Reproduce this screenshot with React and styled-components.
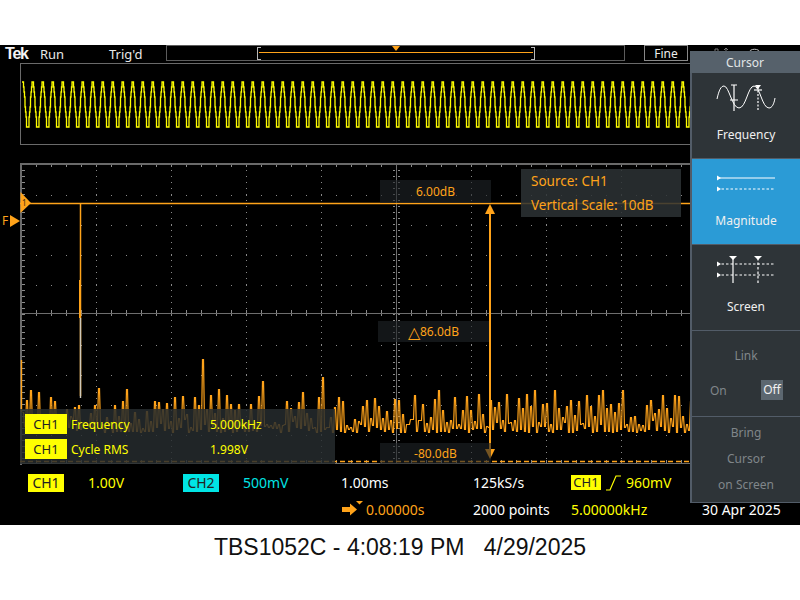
import React from "react";
import styled, { createGlobalStyle } from "styled-components";

const ORANGE = "#ffa31a";
const YELLOW = "#ffff00";
const CYAN = "#00e5e5";
const UI_FONT = '"Noto Sans", "Open Sans", sans-serif';

const Global = createGlobalStyle`
  html, body {
    margin: 0;
    padding: 0;
    background: #ffffff;
  }
`;

const Page = styled.div`
  width: 800px;
  height: 600px;
  overflow: hidden;
  display: flex;
  flex-direction: column;
  padding-top: 45px;
  box-sizing: border-box;
  background: #ffffff;
`;

const Scope = styled.div`
  position: relative;
  height: 480px;
  background: #000000;
  overflow: hidden;
  font-family: ${UI_FONT};
  display: flex;
  flex-direction: column;
`;

const Caption = styled.div`
  flex: 1;
  display: flex;
  align-items: center;
  justify-content: center;
  padding-bottom: 30px;
  font-family: "Liberation Sans", Arial, sans-serif;
  font-size: 23px;
  color: #111111;
  white-space: pre;
`;

const Header = styled.div`
  height: 18px;
  flex: none;
  display: flex;
  align-items: flex-start;
  color: #e8e8e8;
  font-size: 13px;
  line-height: 17px;
  padding-left: 5px;
`;

const Logo = styled.span`
  width: 35px;
  font-family: "Liberation Sans", Arial, sans-serif;
  font-weight: 700;
  font-size: 16px;
  letter-spacing: -1.2px;
  color: #f4f4f4;
`;

const HeaderText = styled.span`
  width: ${(p) => p.$w}px;
  padding-top: 1px;
`;

const TriggerBar = styled.div`
  position: relative;
  width: 459px;
  height: 16px;
  box-sizing: border-box;
  border: 1px solid #5c5c5c;
`;

const TriggerWindow = styled.div`
  position: absolute;
  left: 90px;
  top: 1px;
  width: 278px;
  height: 13px;
  box-sizing: border-box;
  border: 1px solid #b8b8b8;
  border-top: 0;
  border-bottom: 0;
  background:
    linear-gradient(#b8b8b8, #b8b8b8) 0 0 / 3px 1px no-repeat,
    linear-gradient(#b8b8b8, #b8b8b8) 0 100% / 3px 1px no-repeat,
    linear-gradient(#b8b8b8, #b8b8b8) 100% 0 / 3px 1px no-repeat,
    linear-gradient(#b8b8b8, #b8b8b8) 100% 100% / 3px 1px no-repeat;

  &::after {
    content: "";
    position: absolute;
    left: 1px;
    right: 1px;
    top: 5px;
    height: 1px;
    background: ${ORANGE};
  }
`;

const TriggerPin = styled.div`
  position: absolute;
  left: 225px;
  top: 0;
  width: 0;
  height: 0;
  border-left: 4px solid transparent;
  border-right: 4px solid transparent;
  border-top: 5px solid ${ORANGE};
`;

const FineBox = styled.div`
  width: 44px;
  height: 16px;
  margin-left: 19px;
  box-sizing: border-box;
  border: 1px solid #888888;
  text-align: center;
  font-size: 12px;
  line-height: 15px;
  color: #eeeeee;
`;

const PeekIcons = styled.svg`
  margin: 1px 0 0 26px;
  flex: none;
`;

const Overview = styled.div`
  height: 82px;
  flex: none;
  margin-left: 20px;
  box-sizing: border-box;
  border: 1px solid #6a6a6a;
  border-right: 0;
  overflow: hidden;
`;

const FullSvg = styled.svg`
  display: block;
`;

const Plot = styled.div`
  position: relative;
  height: 302px;
  margin-top: 18px;
  flex: none;
`;

const CursorTag = styled.div`
  position: absolute;
  left: ${(p) => p.$x}px;
  top: ${(p) => p.$y}px;
  width: 111px;
  height: ${(p) => p.$h}px;
  background: rgba(30, 36, 38, 0.62);
  color: ${ORANGE};
  font-size: 12px;
  display: flex;
  align-items: center;
  justify-content: center;
`;

const DeltaSign = styled.span`
  font-size: 16px;
  line-height: 16px;
`;

const SourceBox = styled.div`
  position: absolute;
  left: 521px;
  top: 6px;
  width: 160px;
  height: 48px;
  padding-left: 10px;
  box-sizing: border-box;
  background: rgba(44, 50, 52, 0.86);
  color: ${ORANGE};
  font-size: 13.5px;
  line-height: 24px;
`;

const Readouts = styled.div`
  position: absolute;
  left: 20px;
  top: 246px;
  width: 315px;
  height: 55px;
  box-sizing: border-box;
  padding: 5px 0 0 5px;
  background: rgba(38, 44, 46, 0.84);
  display: flex;
  flex-direction: column;
  gap: 5px;
`;

const ReadoutRow = styled.div`
  display: grid;
  grid-template-columns: 46px 139px auto;
  align-items: center;
  height: 20px;
  color: ${YELLOW};
  font-size: 12px;
`;

const ReadoutBadge = styled.span`
  width: 42px;
  height: 20px;
  background: ${YELLOW};
  color: #222222;
  font-size: 13px;
  line-height: 20px;
  text-align: center;
`;

const Status = styled.div`
  flex: 1;
  display: grid;
  grid-template-columns: 155px 158px 132px 98px 131px auto;
  grid-template-rows: 27px 27px;
  align-items: center;
  padding: 4px 0 0 28px;
  font-size: 14px;
`;

const Cell = styled.div`
  display: flex;
  align-items: center;
  gap: ${(p) => p.$gap || 0}px;
  color: ${(p) => p.$color || "#ffffff"};
  white-space: nowrap;
  grid-column: ${(p) => p.$col};
`;

const Badge = styled.span`
  background: ${(p) => p.$bg};
  color: #222222;
  width: ${(p) => p.$w || 36}px;
  height: ${(p) => p.$h || 18}px;
  line-height: ${(p) => p.$h || 18}px;
  text-align: center;
  font-size: ${(p) => (p.$h ? 13 : 14)}px;
`;

const Menu = styled.div`
  position: absolute;
  left: 690px;
  top: 6px;
  width: 110px;
  height: 452px;
  box-sizing: border-box;
  background: #525c68;
  display: flex;
  flex-direction: column;
  padding-left: 2px;
  color: #f0f0f0;
  font-size: 12px;
`;

const MenuTitle = styled.div`
  height: 22px;
  margin-left: -2px;
  background: #56616b;
  text-align: center;
  line-height: 24px;
  color: #e2e6e8;
`;

const MenuItem = styled.div`
  height: 85px;
  margin-bottom: 1px;
  box-sizing: border-box;
  background: ${(p) => (p.$active ? "#2b9bd6" : "#2e3438")};
  display: flex;
  flex-direction: column;
  align-items: center;
  padding-top: ${(p) => p.$pad ?? 11}px;
  &:last-child {
    margin-bottom: 0;
  }
`;

const MenuIcon = styled.svg`
  display: block;
  margin-bottom: ${(p) => p.$gap}px;
  flex: none;
`;

const DimLine = styled.div`
  color: #80868a;
  line-height: 26px;
`;

const Toggle = styled.div`
  width: 100%;
  display: flex;
  justify-content: space-between;
  align-items: center;
  box-sizing: border-box;
  padding: 0 17px 0 18px;
  margin-top: 11px;
  color: #80868a;
`;

const ToggleOn = styled.span`
  width: 22px;
  height: 20px;
  line-height: 20px;
  text-align: center;
  background: #5c6770;
  color: #f2f2f2;
`;

// seeded so the noise floor comes out the same every load
const rand = (() => {
  let a = 20250429;
  return () => {
    a = (a + 0x6d2b79f5) | 0;
    let t = Math.imul(a ^ (a >>> 15), 1 | a);
    t = (t + Math.imul(t ^ (t >>> 7), 61 | t)) ^ t;
    return ((t ^ (t >>> 14)) >>> 0) / 4294967296;
  };
})();

const PEAKS = [
  [30, 390], [36, 392], [95, 388], [126, 389], [200, 359], [215, 389], [260, 381], [302, 392],
  [319, 377], [437, 390], [504, 394], [533, 390], [552, 390], [600, 390], [620, 390],
];

// bins alternate between a tall and a low sample, which gives the thin spikes
const spectrumPoints = () => {
  const pts = [];
  const peaks = [...PEAKS];
  let tall = true;
  for (let x = 22; x < 692; x += 2) {
    let y = tall ? 432 - Math.round(4 + rand() * 34) : 432 - Math.round(rand() * rand() * 14);
    if (tall && peaks.length && x >= peaks[0][0]) y = peaks.shift()[1];
    pts.push(`${x + 0.5},${y + 0.5}`);
    pts.push(`${x + 1.5},${y + 0.5}`);
    tall = !tall;
  }
  return pts.join(" ");
};

const wavePoints = () => {
  const pts = [];
  for (let x = 21; x < 692; x += 0.5) {
    const v = 103.5 + 23.5 * Math.cos((2 * Math.PI * (x - 26.5)) / 10);
    const y = Math.round(v / 5) * 5 + 1;
    pts.push(`${x},${y}`);
    pts.push(`${x + 0.5},${y}`);
  }
  return pts.join(" ");
};

const range = (from, to, step) => {
  const out = [];
  for (let v = from; v <= to; v += step) out.push(v);
  return out;
};

const Graticule = () => {
  const cols = range(21, 771, 75);
  const rows = range(164, 464, 30);
  return (
    <g shapeRendering="crispEdges">
      {rows.map((y) =>
        range(36, 771, 15).map((x) => (
          <rect key={`r${y}-${x}`} x={x} y={y + 1} width="1" height="1" fill="#8a8a8a" />
        ))
      )}
      {cols.map((x) =>
        range(170, 460, 6).map((y) => (
          <rect key={`c${x}-${y}`} x={x} y={y} width="1" height="1" fill="#8a8a8a" />
        ))
      )}
      {range(170, 460, 6).map((y) => (
        <g key={`t${y}`}>
          <rect x="22" y={y} width="3" height="1" fill="#8a8a8a" />
          <rect x="393" y={y} width="2" height="1" fill="#8a8a8a" />
          <rect x="398" y={y} width="2" height="1" fill="#8a8a8a" />
        </g>
      ))}
      {range(36, 771, 15).map((x) => (
        <g key={`h${x}`}>
          <rect x={x} y="310" width="1" height="6" fill="#8a8a8a" />
          <rect x={x} y="165" width="1" height="2" fill="#8a8a8a" />
          <rect x={x} y="460" width="1" height="3" fill="#8a8a8a" />
        </g>
      ))}
      <rect x="21" y="313" width="780" height="1" fill="#6e6e6e" />
      <rect x="396" y="164" width="1" height="300" fill="#6e6e6e" />
      <rect x="20" y="163" width="780" height="1.5" fill="#6a6a6a" />
      <rect x="20" y="163" width="1.5" height="302" fill="#6a6a6a" />
      <rect x="20" y="463" width="780" height="1" fill="#6a6a6a" />
    </g>
  );
};

const Spectrum = () => (
  <FullSvg width="800" height="302" viewBox="0 163 800 302">
    <Graticule />
    <polyline points={spectrumPoints()} fill="none" stroke={ORANGE} strokeWidth="1.2" />
    <path d="M21.5 360V412" stroke={ORANGE} strokeWidth="1.4" />
    <path d="M80.5 203V396" stroke={ORANGE} strokeWidth="1.5" />
    <path d="M80.5 318V398" stroke="#cfc9ba" strokeWidth="1.4" />
    <path d="M80 280V318" stroke={ORANGE} strokeWidth="2" />
    <path d="M20 203.5H690" stroke={ORANGE} strokeWidth="1.5" />
    <path d="M20 461.5H690" stroke={ORANGE} strokeWidth="1.4" strokeDasharray="5 3" />
    <path d="M490 212V452" stroke={ORANGE} strokeWidth="2" />
    <path d="M490 204L495 214H485Z" fill={ORANGE} />
    <path d="M490 459L495 449H485Z" fill={ORANGE} />
    <path d="M20.5 192L31 203L20.5 213Z" fill={ORANGE} />
    <text x="22" y="206" fontSize="8" fill="#3a2a10" fontFamily="Noto Sans, sans-serif">1</text>
    <path d="M10 215L20 221L10 227Z" fill={ORANGE} />
    <text x="2" y="225" fontSize="12" fill={ORANGE} fontFamily="Noto Sans, sans-serif">F</text>
  </FullSvg>
);

const FrequencyIcon = () => (
  <MenuIcon $gap={14} width="60" height="28" viewBox="0 0 60 28" fill="none" stroke="#ffffff">
    <path d="M1 15C3 6 5 2 8 2C13 2 16 24 23 24C30 24 32 2 38 2C44 2 46 24 53 24C56 24 58 20 59 14" strokeWidth="1" />
    <path d="M18 1V27M14 16H22M15 1H21" strokeWidth="1.2" />
    <path d="M42 3V27" strokeWidth="1.2" strokeDasharray="2 1.5" />
    <path d="M38 6H46" strokeWidth="1.2" />
    <path d="M39 1H45L42 5Z" fill="#ffffff" stroke="none" />
  </MenuIcon>
);

const MagnitudeIcon = () => (
  <MenuIcon $gap={16} width="60" height="26" viewBox="0 0 60 26" fill="none" stroke="#ffffff">
    <path d="M1 8H59" strokeWidth="1.2" />
    <path d="M1 19H59" strokeWidth="1.2" strokeDasharray="2.5 2" />
    <path d="M1 5.5L5 8L1 10.5ZM1 16.5L5 19L1 21.5Z" fill="#ffffff" stroke="none" />
  </MenuIcon>
);

const ScreenIcon = () => (
  <MenuIcon $gap={14} width="60" height="28" viewBox="0 0 60 28" fill="none" stroke="#ffffff">
    <path d="M1 8H59M1 19H59" strokeWidth="1.2" strokeDasharray="2.5 2" />
    <path d="M1 5.5L5 8L1 10.5ZM1 16.5L5 19L1 21.5Z" fill="#ffffff" stroke="none" />
    <path d="M17 2V27" strokeWidth="1.2" />
    <path d="M42 2V27" strokeWidth="1.2" strokeDasharray="2.5 2" />
    <path d="M13 0H21L17 4ZM38 0H46L42 4Z" fill="#ffffff" stroke="none" />
  </MenuIcon>
);

const SideMenu = () => (
  <Menu>
    <MenuTitle>Cursor</MenuTitle>
    <MenuItem>
      <FrequencyIcon />
      Frequency
    </MenuItem>
    <MenuItem $active>
      <MagnitudeIcon />
      Magnitude
    </MenuItem>
    <MenuItem>
      <ScreenIcon />
      Screen
    </MenuItem>
    <MenuItem $pad={12}>
      <DimLine>Link</DimLine>
      <Toggle>
        On
        <ToggleOn>Off</ToggleOn>
      </Toggle>
    </MenuItem>
    <MenuItem $pad={3}>
      <DimLine>Bring</DimLine>
      <DimLine>Cursor</DimLine>
      <DimLine>on Screen</DimLine>
    </MenuItem>
  </Menu>
);

export default function App() {
  return (
    <Page>
      <Global />
      <Scope>
        <Header>
          <Logo>Tek</Logo>
          <HeaderText $w={69}>Run</HeaderText>
          <HeaderText $w={57}>Trig'd</HeaderText>
          <TriggerBar>
            <TriggerWindow />
            <TriggerPin />
          </TriggerBar>
          <FineBox>Fine</FineBox>
          <PeekIcons width="50" height="8" viewBox="0 0 50 8" fill="none" stroke="#777777">
            <path d="M1 7V3H4V7M12 7V2M10 4L12 2L14 4" />
            <path d="M35 7C35 2 46 2 46 7" stroke="#c8c8c8" />
          </PeekIcons>
        </Header>
        <Overview>
          <FullSvg width="780" height="82" viewBox="20 63 780 82">
            <polyline points={wavePoints()} fill="none" stroke={YELLOW} strokeWidth="1.3" />
          </FullSvg>
        </Overview>
        <Plot>
          <Spectrum />
          <CursorTag $x={380} $y={17} $h={23}>6.00dB</CursorTag>
          <CursorTag $x={378} $y={158} $h={21}>
            <DeltaSign>△</DeltaSign>86.0dB
          </CursorTag>
          <CursorTag $x={380} $y={280} $h={21}>-80.0dB</CursorTag>
          <SourceBox>
            <div>Source: CH1</div>
            <div>Vertical Scale: 10dB</div>
          </SourceBox>
          <Readouts>
            <ReadoutRow>
              <ReadoutBadge>CH1</ReadoutBadge>
              <span>Frequency</span>
              <span>5.000kHz</span>
            </ReadoutRow>
            <ReadoutRow>
              <ReadoutBadge>CH1</ReadoutBadge>
              <span>Cycle RMS</span>
              <span>1.998V</span>
            </ReadoutRow>
          </Readouts>
        </Plot>
        <Status>
          <Cell $gap={24} $color={YELLOW}>
            <Badge $bg={YELLOW}>CH1</Badge>
            1.00V
          </Cell>
          <Cell $gap={24} $color={CYAN}>
            <Badge $bg={CYAN}>CH2</Badge>
            500mV
          </Cell>
          <Cell>1.00ms</Cell>
          <Cell>125kS/s</Cell>
          <Cell $gap={4} $color={YELLOW}>
            <Badge $bg={YELLOW} $w={30} $h={15}>CH1</Badge>
            <svg width="17" height="18" viewBox="0 0 17 18" fill="none" stroke={YELLOW} strokeWidth="1.2">
              <path d="M1 16H5L11 2H16" />
            </svg>
            960mV
          </Cell>
          <Cell />
          <Cell $col="3" $gap={3} $color={ORANGE}>
            <svg width="22" height="18" viewBox="0 0 22 18" fill={ORANGE}>
              <path d="M1 6H9V2.5L16 8.5L9 14.5V11H1Z" />
              <path d="M15 0H22L18.5 3.5Z" />
            </svg>
            0.00000s
          </Cell>
          <Cell>2000 points</Cell>
          <Cell $color={YELLOW}>5.00000kHz</Cell>
          <Cell>30 Apr 2025</Cell>
        </Status>
        <SideMenu />
      </Scope>
      <Caption>{"TBS1052C - 4:08:19 PM   4/29/2025"}</Caption>
    </Page>
  );
}
